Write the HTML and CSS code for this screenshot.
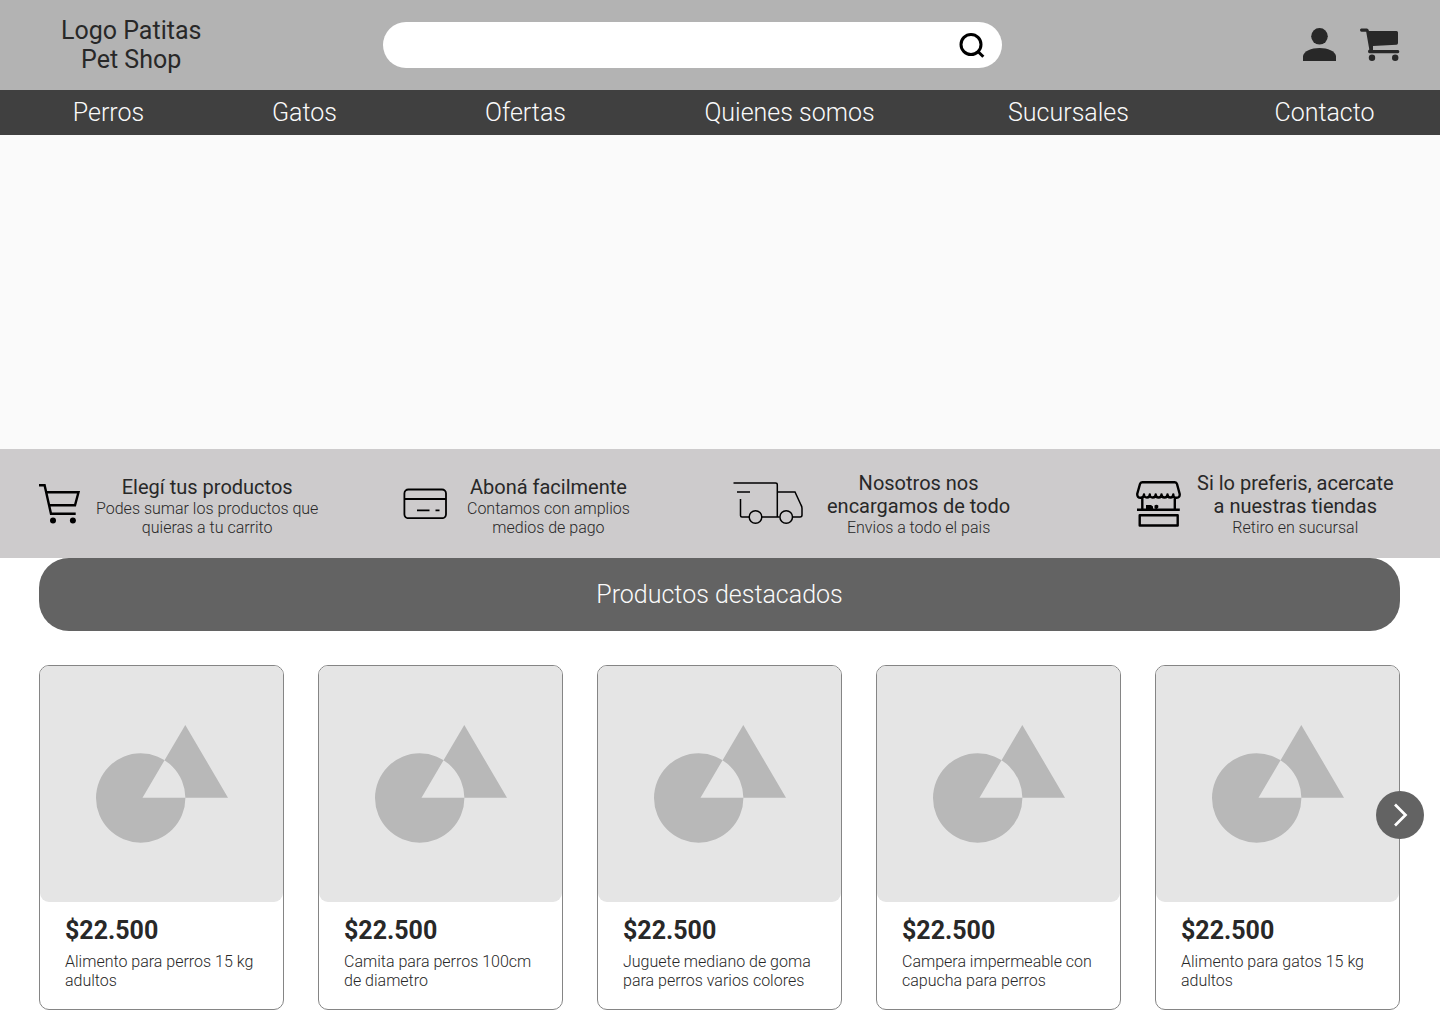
FILE: index.html
```html
<!DOCTYPE html>
<html lang="es">
<head>
<meta charset="utf-8">
<meta name="viewport" content="width=device-width, initial-scale=1">
<title>Patitas Pet Shop</title>
<link rel="stylesheet" href="styles.css">
</head>
<body>
<svg class="sprite" aria-hidden="true">
  <symbol id="placeholder" viewBox="0 0 243 236">
    <path fill="#b8b8b8" fill-rule="evenodd" d="M56 132a44.700 44.700 0 1 0 89.400 0a44.700 44.700 0 1 0-89.400 0zM145.300 59L188 131.700H102.500z"/>
  </symbol>
</svg>
<header class="header">
  <a class="logo" href="#">Logo Patitas<br>Pet Shop</a>
  <form class="search" role="search">
    <input class="search-input" type="search" aria-label="Buscar productos">
    <button class="icon-button" type="submit" aria-label="Buscar">
      <svg width="26" height="26" viewBox="0 0 26 26" fill="none" stroke="#000" stroke-width="3"><circle cx="12" cy="12.500" r="10"/><path d="M18.500 19L24.300 24.800"/></svg>
    </button>
  </form>
  <div class="account">
    <button class="icon-button" type="button" aria-label="Mi cuenta">
      <svg width="33" height="33" viewBox="0 0 33 33" fill="#282828"><circle cx="16.500" cy="8.300" r="8.300"/><path d="M0 33V28C1 23 8 20 16.500 20S32 23 33 28V33z"/></svg>
    </button>
    <button class="icon-button" type="button" aria-label="Carrito">
      <svg width="40" height="34" viewBox="0 0 40 34" fill="#282828"><path d="M1.500 1.500H7Q8.500 1.500 9 4H36.500Q38 4 38 5.500V16Q38 17.500 36.500 17.700L13 19V23H38Q39.300 23 39.300 24.500T38 26.200H9.500Q8 26.200 8 24.500T9.300 22.500L6.200 4.800H1.500Q0 4.800 0 3.100T1.500 1.500z"/><circle cx="12" cy="30.700" r="3.200"/><circle cx="35.200" cy="30.700" r="3.200"/></svg>
    </button>
  </div>
</header>
<nav class="nav" aria-label="Principal">
  <a href="#">Perros</a>
  <a href="#">Gatos</a>
  <a href="#">Ofertas</a>
  <a href="#">Quienes somos</a>
  <a href="#">Sucursales</a>
  <a href="#">Contacto</a>
</nav>
<main>
  <section class="hero" aria-label="Promociones"></section>
  <section class="features" aria-label="Cómo comprar">
    <div class="feature">
      <svg width="41" height="40" viewBox="0 0 41 40" fill="none" stroke="#000" stroke-width="2.400"><path d="M0 1.200H5.600L12 29.800H36.700M7.500 8.200H39.500L36 21.200H10.500"/><g fill="#000" stroke="none"><circle cx="14" cy="36.400" r="3"/><circle cx="33.900" cy="36.400" r="3"/></g></svg>
      <div class="feature-text">
        <h2>Elegí tus productos</h2>
        <p>Podes sumar los productos que<br>quieras a tu carrito</p>
      </div>
    </div>
    <div class="feature feature-card">
      <svg width="44" height="31" viewBox="0 0 44 31" fill="none" stroke="#000" stroke-width="1.800"><rect x="1.400" y="1.500" width="41.600" height="28.700" rx="4"/><path d="M1 11H43M14 22.300H26.500M32.500 22.300H36.500"/></svg>
      <div class="feature-text">
        <h2>Aboná facilmente</h2>
        <p>Contamos con amplios<br>medios de pago</p>
      </div>
    </div>
    <div class="feature feature-shipping">
      <svg width="70" height="43" viewBox="0 0 70 43" fill="none" stroke="#000" stroke-width="1.500"><path d="M0.500 1H42.500Q44.300 1 44.300 2.700V35M4 10H17M7.500 17V33.500Q7.500 35 9 35H16M29 35H46.500M44.300 10H62L68 23Q69 24.500 69 26.500V33Q69 35 67 35H59.500"/><circle cx="22.500" cy="35" r="6.300"/><circle cx="53.200" cy="35" r="6.300"/></svg>
      <div class="feature-text">
        <h2>Nosotros nos<br>encargamos de todo</h2>
        <p>Envios a todo el pais</p>
      </div>
    </div>
    <div class="feature">
      <svg width="45" height="46" viewBox="0 0 45 46" fill="none" stroke="#000" stroke-width="2.400" stroke-linejoin="round"><path d="M6.200 1.200H38.800Q40.500 1.200 41 3L43.700 13Q44 16.800 40.600 16.800T37.300 13.500Q37.300 16.500 34.400 16.500T31.500 13.500Q31.500 16.500 28.500 16.500T25.500 13.500Q25.500 16.500 22.600 16.500T19.700 13.500Q19.700 16.500 16.700 16.500T13.800 13.500Q13.800 16.500 10.900 16.500T8 13.500Q8 16.800 4.600 16.800T1.200 13L4 3Q4.500 1.200 6.200 1.200zM6.300 16.500V28M38.800 16.500V28M1 28.700H43.800"/><rect x="3.700" y="34.300" width="38" height="10.200"/><path fill="#000" stroke="none" d="M10 24H15L17 25.500V28H10zM18.500 24.500Q20.500 23 22.300 24.500V26.500L20.500 28.500L18.500 27z"/></svg>
      <div class="feature-text">
        <h2>Si lo preferis, acercate<br>a nuestras tiendas</h2>
        <p>Retiro en sucursal</p>
      </div>
    </div>
  </section>
  <section class="featured">
    <h2 class="featured-title">Productos destacados</h2>
    <div class="carousel">
      <article class="product">
        <svg class="product-image" viewBox="0 0 243 236" role="img" aria-label="Imagen del producto"><use href="#placeholder"/></svg>
        <div class="product-info"><p class="price">$22.500</p><h3>Alimento para perros 15 kg adultos</h3></div>
      </article>
      <article class="product">
        <svg class="product-image" viewBox="0 0 243 236" role="img" aria-label="Imagen del producto"><use href="#placeholder"/></svg>
        <div class="product-info"><p class="price">$22.500</p><h3>Camita para perros 100cm de diametro</h3></div>
      </article>
      <article class="product">
        <svg class="product-image" viewBox="0 0 243 236" role="img" aria-label="Imagen del producto"><use href="#placeholder"/></svg>
        <div class="product-info"><p class="price">$22.500</p><h3>Juguete mediano de goma para perros varios colores</h3></div>
      </article>
      <article class="product">
        <svg class="product-image" viewBox="0 0 243 236" role="img" aria-label="Imagen del producto"><use href="#placeholder"/></svg>
        <div class="product-info"><p class="price">$22.500</p><h3>Campera impermeable con capucha para perros</h3></div>
      </article>
      <article class="product">
        <svg class="product-image" viewBox="0 0 243 236" role="img" aria-label="Imagen del producto"><use href="#placeholder"/></svg>
        <div class="product-info"><p class="price">$22.500</p><h3>Alimento para gatos 15 kg adultos</h3></div>
      </article>
      <button class="next" type="button" aria-label="Siguiente">
        <svg width="16" height="24" viewBox="0 0 16 24" fill="none" stroke="#fff" stroke-width="2.700"><path d="M3 1.500L13.500 12L3 22.500"/></svg>
      </button>
    </div>
  </section>
</main>
</body>
</html>
```
FILE: styles.css
```css
* {
  box-sizing: border-box;
}

body {
  margin: 0;
  background: #fff;
  color: #282828;
  font-family: Roboto, sans-serif;
}

h2,
h3,
p {
  margin: 0;
}

a {
  color: inherit;
  text-decoration: none;
}

button {
  padding: 0;
  border: 0;
  background: none;
  cursor: pointer;
}

svg {
  display: block;
  flex-shrink: 0;
}

.sprite {
  position: absolute;
  width: 0;
  height: 0;
}

/* Header */
.header {
  display: grid;
  grid-template-columns: 383fr 619fr 438fr;
  align-items: center;
  min-height: 90px;
  background: #b3b3b3;
}

.logo {
  justify-self: start;
  margin-left: 61px;
  font-size: 25px;
  line-height: 29px;
  text-align: center;
}

.search {
  display: flex;
  align-items: center;
  height: 46px;
  padding: 0 17px 0 24px;
  border-radius: 23px;
  background: #fff;
}

.search-input {
  flex: 1;
  min-width: 0;
  border: 0;
  outline: 0;
  background: none;
  font: 300 20px/23px Roboto, sans-serif;
}

.account {
  display: flex;
  justify-content: flex-end;
  align-items: center;
  gap: 24px;
  padding: 0 40px 2px 0;
}

/* Navigation */
.nav {
  display: grid;
  grid-template-columns: 217fr 175fr 267fr 261fr 297fr 215fr;
  padding-right: 8px;
  background: #404040;
  color: #fafafa;
  font-size: 25px;
  font-weight: 300;
  line-height: 45px;
  text-align: center;
}

.hero {
  height: 314px;
  background: #fafafa;
}

/* Purchase steps */
.features {
  display: grid;
  grid-template-columns: 364fr 330fr 403fr 264fr;
  min-height: 109px;
  padding: 0 40px 0 39px;
  background: #cdcbcc;
}

.feature {
  display: flex;
  align-items: center;
  gap: 16px;
}

.feature-card {
  gap: 20px;
}

.feature-shipping {
  gap: 24px;
}

.feature-text {
  align-self: flex-end;
  padding-bottom: 21px;
  text-align: center;
  white-space: nowrap;
}

.feature h2 {
  font-size: 20px;
  font-weight: 400;
  line-height: 23px;
}

.feature p {
  font-size: 16px;
  font-weight: 300;
  line-height: 19px;
}

/* Featured products */
.featured {
  padding: 0 40px 14px 39px;
}

.featured-title {
  border-radius: 30px;
  background: #636363;
  color: #fafafa;
  font-size: 25px;
  font-weight: 300;
  line-height: 73px;
  text-align: center;
}

.carousel {
  position: relative;
  display: grid;
  grid-template-columns: repeat(5, 1fr);
  gap: 34px;
  margin-top: 34px;
}

.product {
  border: 1px solid #858585;
  border-radius: 10px;
}

.product-image {
  width: 100%;
  height: auto;
  border-radius: 9px;
  background: #e5e5e5;
}

.product-info {
  padding: 14px 25px 19px;
}

.price {
  font-size: 25px;
  font-weight: 700;
  line-height: 29px;
}

.product h3 {
  margin-top: 7px;
  font-size: 16px;
  font-weight: 300;
  line-height: 19px;
}

.next {
  position: absolute;
  top: 126px;
  right: -24px;
  display: grid;
  place-items: center;
  width: 48px;
  height: 48px;
  border-radius: 50%;
  background: #636363;
}
```
